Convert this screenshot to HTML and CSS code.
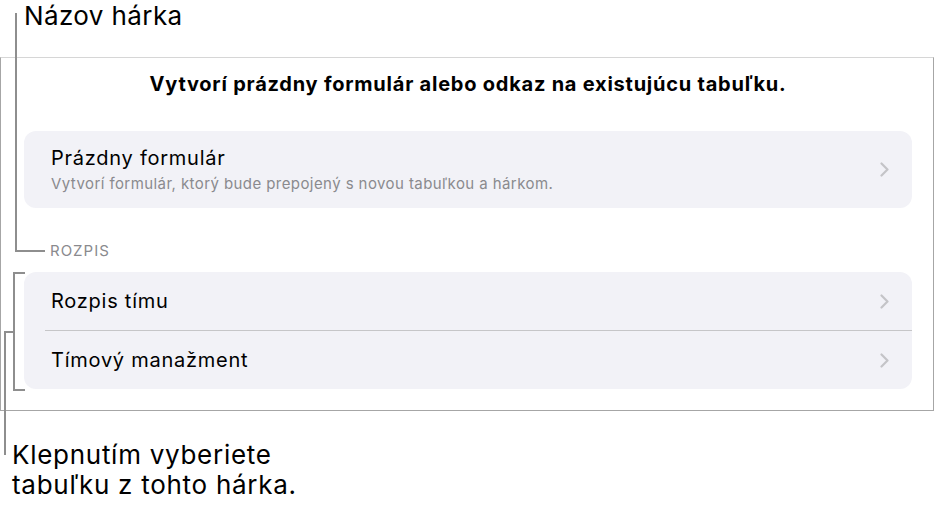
FILE: index.html
```html
<!DOCTYPE html>
<html lang="sk">
<head>
<meta charset="utf-8">
<title>Názov hárka</title>
<link rel="stylesheet" href="styles.css">
</head>
<body>
<div class="page">
  <div class="label-top">Názov hárka</div>

  <div class="frame">
    <div class="heading">Vytvorí prázdny formulár alebo odkaz na existujúcu tabuľku.</div>

    <div class="card">
      <div class="row row-double">
        <div class="row-text">
          <div class="row-title">Prázdny formulár</div>
          <div class="row-sub">Vytvorí formulár, ktorý bude prepojený s novou tabuľkou a hárkom.</div>
        </div>
        <svg class="chev" width="9" height="15" viewBox="0 0 9 15"><path d="M1.5 1.5 L7.5 7.5 L1.5 13.5" fill="none" stroke="#c4c4c7" stroke-width="2.2" stroke-linecap="round" stroke-linejoin="round"/></svg>
      </div>
    </div>

    <div class="section-label">ROZPIS</div>

    <div class="card">
      <div class="row row-single">
        <div class="row-title">Rozpis tímu</div>
        <svg class="chev" width="9" height="15" viewBox="0 0 9 15"><path d="M1.5 1.5 L7.5 7.5 L1.5 13.5" fill="none" stroke="#c4c4c7" stroke-width="2.2" stroke-linecap="round" stroke-linejoin="round"/></svg>
      </div>
      <div class="divider"></div>
      <div class="row row-single">
        <div class="row-title">Tímový manažment</div>
        <svg class="chev" width="9" height="15" viewBox="0 0 9 15"><path d="M1.5 1.5 L7.5 7.5 L1.5 13.5" fill="none" stroke="#c4c4c7" stroke-width="2.2" stroke-linecap="round" stroke-linejoin="round"/></svg>
      </div>
    </div>
  </div>

  <div class="label-bottom">Klepnutím vyberiete<br>tabuľku z tohto hárka.</div>

  <div class="line l1-v"></div>
  <div class="line l1-h"></div>
  <div class="line br-top"></div>
  <div class="line br-v"></div>
  <div class="line br-bot"></div>
  <div class="line l2-h"></div>
  <div class="line l2-v"></div>
</div>
</body>
</html>
```

FILE: styles.css
```css
html, body {
  margin: 0;
  padding: 0;
  background: #ffffff;
}

body {
  font-family: Inter, "Noto Sans", "Liberation Sans", sans-serif;
  color: #000000;
}

.page {
  position: relative;
  width: 935px;
  height: 513px;
  overflow: hidden;
}

.label-top {
  font-size: 26px;
  line-height: 30px;
  padding: 1px 0 0 24px;
  height: 26px;
  letter-spacing: 0.4px;
}

.frame {
  box-sizing: border-box;
  width: 934px;
  margin-top: 30px;
  border: 1px solid #a6a6a6;
  border-top-color: #d6d6d6;
  padding: 14px 21px 21px 23px;
}

.heading {
  text-align: center;
  font-size: 20px;
  line-height: 24px;
  font-weight: 700;
  letter-spacing: 0.77px;
  margin-bottom: 35px;
}

.card {
  background: #f2f2f7;
  border-radius: 12px;
}

.row {
  display: flex;
  align-items: center;
  justify-content: space-between;
  padding: 0 23px 0 27px;
}

.row-double {
  height: 77px;
}

.row-single {
  height: 58px;
}

.row-title {
  font-size: 20px;
  line-height: 24px;
  letter-spacing: 0.75px;
}

.row-sub {
  font-size: 15px;
  line-height: 20px;
  color: #8a8a8e;
  margin-top: 4px;
  letter-spacing: 0.42px;
}

.chev {
  display: block;
  flex: none;
}

.divider {
  height: 1px;
  background: #c6c6c8;
  margin-left: 21px;
}

.section-label {
  font-size: 15px;
  line-height: 20px;
  color: #8a8a8e;
  padding-left: 26px;
  margin: 33px 0 11px;
  letter-spacing: 1px;
}

.label-bottom {
  font-size: 26px;
  line-height: 30px;
  padding: 29px 0 0 12px;
  letter-spacing: 0.72px;
}

.line {
  position: absolute;
  background: #8e8e8e;
}

.l1-v { left: 15px; top: 13px; width: 2px; height: 239px; }
.l1-h { left: 15px; top: 250px; width: 30px; height: 2px; }

.br-top { left: 13px; top: 272px; width: 12px; height: 2px; }
.br-v   { left: 13px; top: 272px; width: 2px; height: 119px; }
.br-bot { left: 13px; top: 389px; width: 12px; height: 2px; }

.l2-h { left: 4px; top: 331px; width: 10px; height: 2px; }
.l2-v { left: 4px; top: 331px; width: 2px; height: 124px; }
```
